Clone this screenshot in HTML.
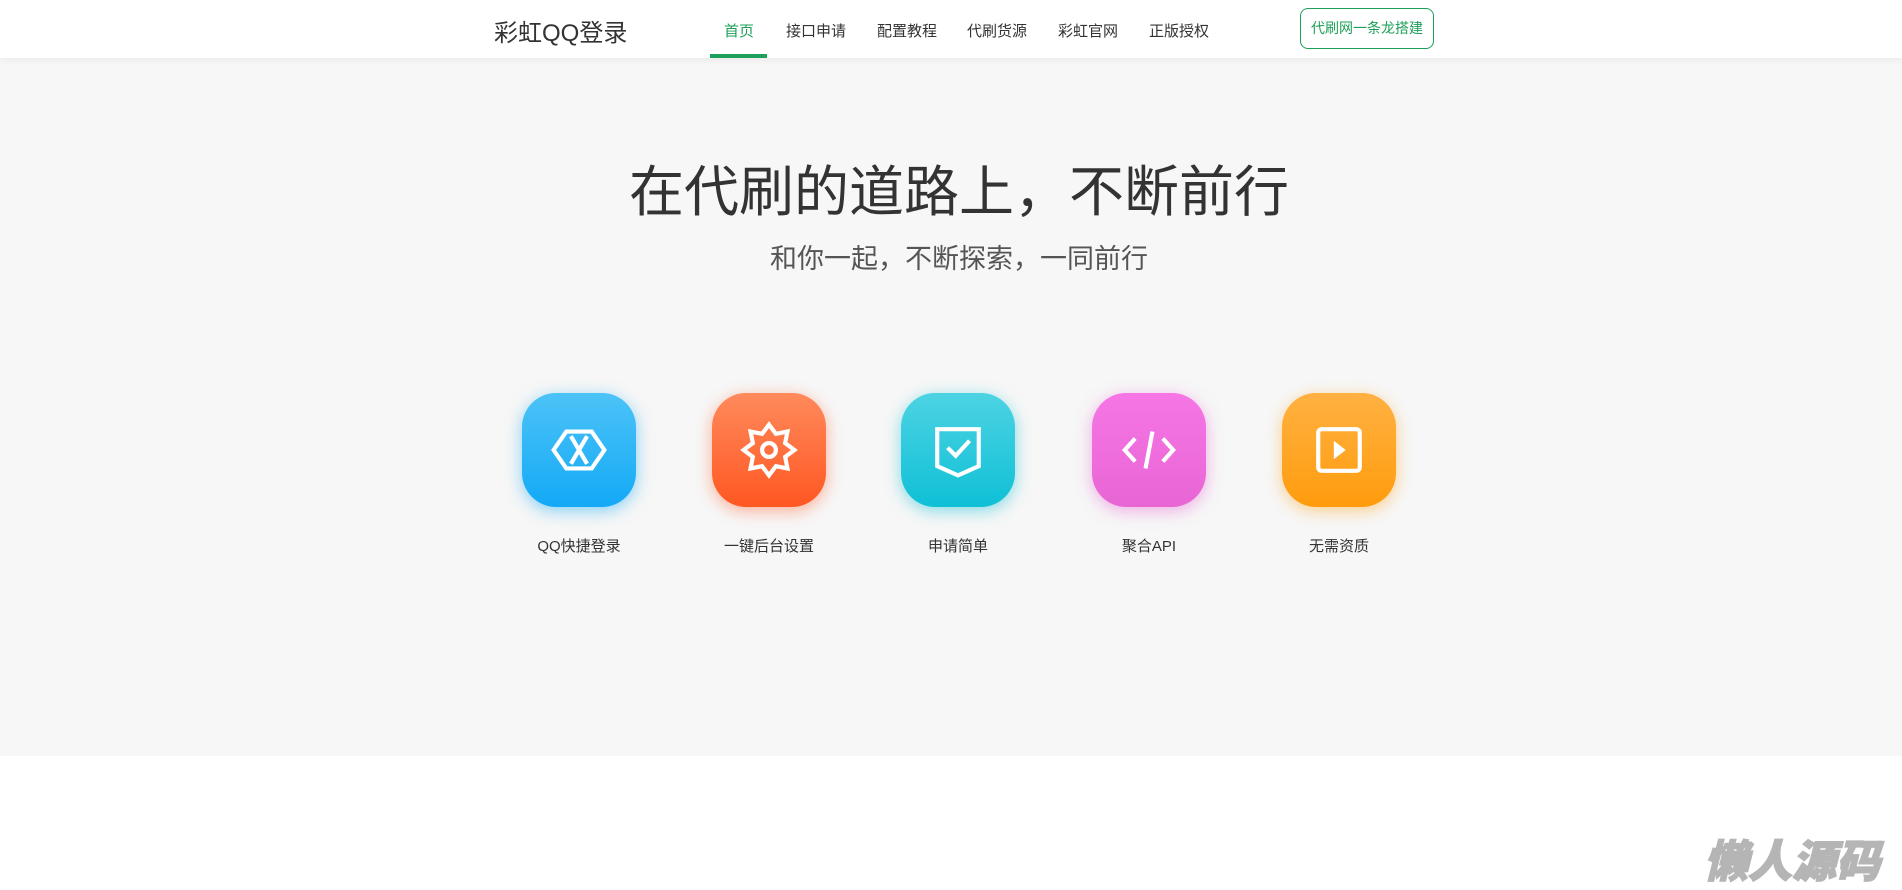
<!DOCTYPE html>
<html><head><meta charset="utf-8"><style>
*{margin:0;padding:0;box-sizing:border-box}
body{width:1902px;height:890px;background:#fff;font-family:"Liberation Sans","Noto Sans CJK SC",sans-serif;position:relative;overflow:hidden;color:#333}
.hdr{position:absolute;left:0;top:0;width:1902px;height:58px;background:#fff;box-shadow:0 2px 8px rgba(0,0,0,.06);z-index:2}
.logo{position:absolute;left:494px;top:13px;font-size:24px;color:#333}
.nav a{position:absolute;top:20px;font-size:15px;color:#333;text-decoration:none}
.ul{position:absolute;left:710px;top:54px;width:57px;height:4px;background:#1e9f5a}
.btn{position:absolute;left:1300px;top:8px;width:134px;height:41px;border:1px solid #1e9f5a;border-radius:8px;color:#1e9f5a;font-size:14px;text-align:center;line-height:39px}
.hero{position:absolute;left:0;top:58px;width:1902px;height:698px;background:#f7f7f7}
h1{position:absolute;left:0;width:1902px;padding-left:16px;text-align:center;font-weight:normal;font-size:55px;color:#333;line-height:66px}
h2{position:absolute;left:0;width:1902px;padding-left:16px;text-align:center;font-weight:normal;font-size:27px;color:#555}
.ic{position:absolute;top:393px;width:114px;height:114px;border-radius:34px}
.ic svg{position:absolute;left:27px;top:27px}
.lb{position:absolute;top:535px;width:190px;text-align:center;font-size:15px;color:#333}
.wm{position:absolute;left:1704px;top:826px;font-size:44px;font-weight:900;font-style:italic;color:#b5b5b5;-webkit-text-stroke:1.5px #b5b5b5}
</style></head><body>
<div class="hdr">
<div class="logo">彩虹QQ登录</div>
<div class="nav">
<a style="left:724px;color:#1e9f5a">首页</a>
<a style="left:786px">接口申请</a>
<a style="left:877px">配置教程</a>
<a style="left:967px">代刷货源</a>
<a style="left:1058px">彩虹官网</a>
<a style="left:1149px">正版授权</a>
</div>
<div class="ul"></div>
<div class="btn">代刷网一条龙搭建</div>
</div>
<div class="hero">
<h1 style="top:101px">在代刷的道路上，不断前行</h1>
<h2 style="top:179px">和你一起，不断探索，一同前行</h2>
</div>
<div class="ic" style="left:522px;background:linear-gradient(#4cc3f7,#14a9f6);box-shadow:0 4px 16px rgba(20,169,246,.5)">
<svg width="60" height="60" viewBox="0 0 52 52" fill="none" stroke="#fff" stroke-width="3.6"><path d="M15 10H37L48 26L37 42H15L4 26Z"/><path d="M19 14L33 38M33 14L19 38"/></svg></div>
<div class="ic" style="left:712px;background:linear-gradient(#ff8a5c,#ff5722);box-shadow:0 4px 16px rgba(255,87,34,.45)">
<svg width="60" height="60" viewBox="0 0 52 52" fill="none" stroke="#fff" stroke-width="3.6"><path d="M26 4L32 12L42 10L40 20L48 26L40 32L42 42L32 40L26 48L20 40L10 42L12 32L4 26L12 20L10 10L20 12Z"/><circle cx="26" cy="26" r="6"/></svg></div>
<div class="ic" style="left:901px;background:linear-gradient(#4dd3e3,#0fc0d6);box-shadow:0 4px 16px rgba(15,192,214,.5)">
<svg width="60" height="60" viewBox="0 0 52 52" fill="none" stroke="#fff" stroke-width="3.6"><path d="M8 8H44V40L26 48L8 40Z"/><path d="M17 24L24 31L36 18"/></svg></div>
<div class="ic" style="left:1092px;background:linear-gradient(#f676e5,#e865d4);box-shadow:0 4px 16px rgba(232,101,212,.5)">
<svg width="60" height="60" viewBox="0 0 52 52" fill="none" stroke="#fff" stroke-width="3.6"><path d="M14 16L5 26L14 36M38 16L47 26L38 36M29 10L23 42"/></svg></div>
<div class="ic" style="left:1282px;background:linear-gradient(#ffb142,#ff9c0d);box-shadow:0 4px 16px rgba(255,156,13,.45)">
<svg width="60" height="60" viewBox="0 0 52 52" fill="none" stroke="#fff" stroke-width="3.6"><rect x="8" y="8" width="36" height="36" rx="3"/><path d="M22 19L31 26L22 33Z" fill="#fff" stroke-width="1"/></svg></div>
<div class="lb" style="left:484px">QQ快捷登录</div>
<div class="lb" style="left:674px">一键后台设置</div>
<div class="lb" style="left:863px">申请简单</div>
<div class="lb" style="left:1054px">聚合API</div>
<div class="lb" style="left:1244px">无需资质</div>
<div class="wm">懒人源码</div>
</body></html>
